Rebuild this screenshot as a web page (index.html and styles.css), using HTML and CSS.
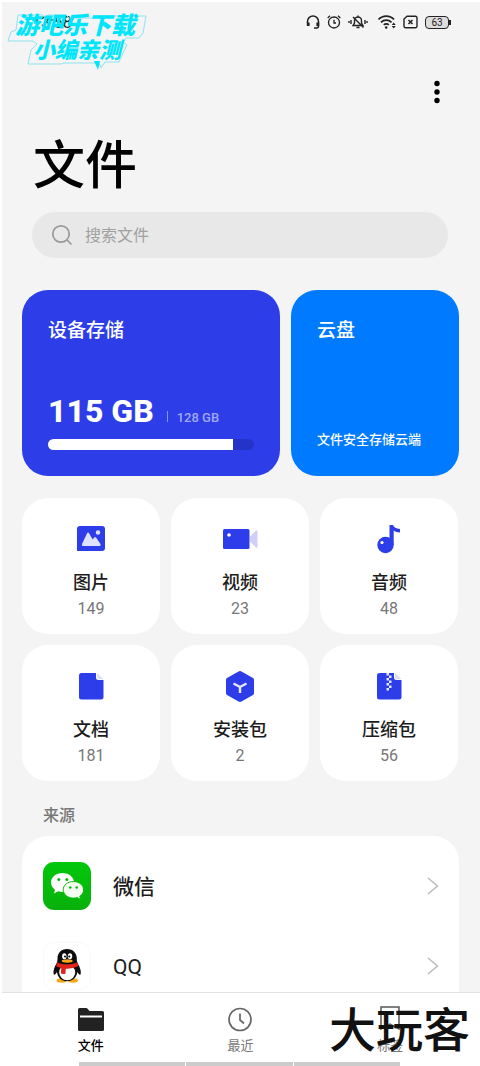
FILE: index.html
```html
<!DOCTYPE html>
<html lang="zh-CN">
<head>
<meta charset="utf-8">
<meta name="viewport" content="width=device-width, initial-scale=1">
<title>文件</title>
<link rel="stylesheet" href="styles.css">
</head>
<body>
<div class="app">
  <header class="status">
    <time class="clock">13:58</time>
    <div class="status-icons">
      <svg width="14" height="14" viewBox="0 0 14 14" fill="none" stroke="#222" stroke-width="1.500"><path d="M1.500 8V6.500a5.500 5.500 0 0 1 11 0V11a2 2 0 0 1-2 2H8"/><path d="M2.200 7.500v3.500M11.800 7.500v3.500" stroke-width="2.800"/></svg>
      <svg width="14" height="14" viewBox="0 0 14 14" fill="none" stroke="#222" stroke-width="1.300"><circle cx="7" cy="7.500" r="5.500"/><path d="M7 4.800V8h2M.7 2.900 3 .8M13.300 2.900 11 .8"/></svg>
      <svg class="bell" width="20" height="14" viewBox="0 0 20 14" fill="none" stroke="#222" stroke-width="1.400"><path d="M5 10.500h10L13.500 8V5.500a3.500 3.500 0 0 0-7 0V8zM10 .5V2M8.500 12.500h3M5 2l10.500 10.500M3 5v4M17 5v4M1 6v2M19 6v2"/></svg>
      <svg width="18" height="14" viewBox="0 0 18 14" fill="none" stroke="#222" stroke-width="1.800"><path d="M.5 4.500a10.500 10.500 0 0 1 15.500 0M3 7.300a7.500 7.500 0 0 1 10.500 0M5.800 9.900a3.500 3.500 0 0 1 5 0"/><circle cx="8.200" cy="12.500" r="1.300" fill="#222" stroke="none"/><path d="m13.700 10 2-2.500 2 2.500zM13.700 11l2 2.500 2-2.500z" fill="#222" stroke="none"/></svg>
      <svg width="15" height="14" viewBox="0 0 15 14" fill="none" stroke="#222" stroke-width="1.400"><path d="M4 1.200h8.500a1.500 1.500 0 0 1 1.500 1.500v8.600a1.500 1.500 0 0 1-1.500 1.500h-10A1.500 1.500 0 0 1 1 11.300V4z"/><path d="m5.500 5 4 4m0-4-4 4" stroke-width="1.600"/></svg>
      <span class="battery">63</span>
    </div>
  </header>

  <main class="content">
    <div class="toolbar">
      <button class="more" aria-label="更多"><svg width="8" height="26" viewBox="0 0 8 26"><circle cx="4" cy="4.500" r="2.700"/><circle cx="4" cy="13" r="2.700"/><circle cx="4" cy="21.500" r="2.700"/></svg></button>
    </div>
    <h1 class="title">文件</h1>
    <label class="search">
      <svg width="22" height="22" viewBox="0 0 22 22" fill="none" stroke="#999" stroke-width="1.700"><circle cx="10" cy="10" r="8.200"/><path d="m16 16 4.500 4.500"/></svg>
      <input class="search-input" type="search" placeholder="搜索文件" aria-label="搜索文件">
    </label>

    <section class="storage">
      <a class="card card-device" href="#device">
        <h2 class="card-title">设备存储</h2>
        <div class="usage"><strong class="used">115 GB</strong><span class="divider"></span><span class="total">128 GB</span></div>
        <div class="bar"><div class="bar-fill" style="width:90%"></div></div>
      </a>
      <a class="card card-cloud" href="#cloud">
        <h2 class="card-title">云盘</h2>
        <p class="card-note">文件安全存储云端</p>
      </a>
    </section>

    <section class="tiles">
      <a class="tile" href="#images">
        <svg class="tile-icon" width="36" height="36" viewBox="0 0 36 36"><path d="M4 8a3 3 0 0 1 3-3h22a3 3 0 0 1 3 3v19a3 3 0 0 1-3 3H4z" fill="#2d3de9"/><path d="M9 23 14 12.500q1-2.200 2.200 0l3.500 6 1.500-2q1-1.300 2.200.5L27.500 23q.8 2-1 2H10q-1.800 0-1-2z" fill="#dfe2ff"/><circle cx="25" cy="11.500" r="2.200" fill="#dfe2ff"/></svg>
        <span class="tile-name">图片</span><span class="tile-count">149</span>
      </a>
      <a class="tile" href="#videos">
        <svg class="tile-icon" width="36" height="36" viewBox="0 0 36 36"><rect x="1" y="8" width="26.500" height="20" rx="1.500" fill="#2d3de9"/><circle cx="7" cy="14" r="1.800" fill="#fff"/><path d="m28 15.500 6-6q1.500-1 1.500 1v15q0 2-1.500 1l-6-6z" fill="#cfcffa"/></svg>
        <span class="tile-name">视频</span><span class="tile-count">23</span>
      </a>
      <a class="tile" href="#audio">
        <svg class="tile-icon" width="36" height="36" viewBox="0 0 36 36"><circle cx="14.500" cy="24" r="8.200" fill="#2d3de9"/><path d="M18.500 4H22q1 3.500 7 4v3.500q-4.500 0-6.300-2V24h-4.200z" fill="#2d3de9"/><circle cx="11" cy="21.500" r="1.600" fill="#fff"/></svg>
        <span class="tile-name">音频</span><span class="tile-count">48</span>
      </a>
      <a class="tile" href="#docs">
        <svg class="tile-icon" width="36" height="36" viewBox="0 0 36 36"><path d="M6 7.500a2.500 2.500 0 0 1 2.500-2.500h14.500v4.500a2.500 2.500 0 0 0 2.500 2.500H30.500v17a2.500 2.500 0 0 1-2.500 2.500H8.500a2.500 2.500 0 0 1-2.500-2.500z" fill="#2d3de9"/><path d="M24 5l6.500 6H26a2 2 0 0 1-2-2z" fill="#dce0f5"/></svg>
        <span class="tile-name">文档</span><span class="tile-count">181</span>
      </a>
      <a class="tile" href="#apks">
        <svg class="tile-icon" width="36" height="36" viewBox="0 0 36 36"><path d="M16.500 3.500q1.500-.8 3 0L31 10q1 .7 1 2v13q0 1.300-1 2l-11.500 6.500q-1.500.8-3 0L5 27q-1-.7-1-2V12q0-1.300 1-2z" fill="#2d3de9"/><path d="m11.500 15.500 6.500 3.500 6.500-3.500M18 19v6" fill="none" stroke="#e8eaff" stroke-width="2.400"/></svg>
        <span class="tile-name">安装包</span><span class="tile-count">2</span>
      </a>
      <a class="tile" href="#archives">
        <svg class="tile-icon" width="36" height="36" viewBox="0 0 36 36"><path d="M6 7.500a2.500 2.500 0 0 1 2.500-2.500h14.500v4.500a2.500 2.500 0 0 0 2.500 2.500H30.500v17a2.500 2.500 0 0 1-2.500 2.500H8.500a2.500 2.500 0 0 1-2.500-2.500z" fill="#2d3de9"/><path d="M24 5l6.500 6H26a2 2 0 0 1-2-2z" fill="#dce0f5"/><path d="M15.500 5h2.500v2.500h2.500V10H18v2.500h2.500V15H18v2.500h2.500V20H18v2.500h-2.500V20H18v-2.500h-2.500V15H18v-2.500h-2.500V10H18V7.500h-2.500z" fill="#e8eaff"/></svg>
        <span class="tile-name">压缩包</span><span class="tile-count">56</span>
      </a>
    </section>

    <h3 class="section-label">来源</h3>
    <section class="sources">
      <a class="source" href="#wechat">
        <svg width="48" height="48" viewBox="0 0 48 48"><defs><linearGradient id="wx" x1="0" y1="0" x2="0" y2="1"><stop offset="0" stop-color="#02c80a"/><stop offset="1" stop-color="#08b00b"/></linearGradient></defs><rect width="48" height="48" rx="11" fill="url(#wx)"/><path d="M19.500 11C13 11 8 15.200 8 20.500c0 3 1.500 5.500 4 7.300L11 31.500l4.200-2.200c1.300.4 2.800.7 4.300.7 6.500 0 11.500-4.200 11.500-9.500S26 11 19.500 11z" fill="#fff"/><path d="M30.500 19.500c-5.800 0-10.300 3.700-10.300 8.300s4.500 8.300 10.300 8.300c1.300 0 2.500-.2 3.700-.6l3.400 2-.8-3.300c2.400-1.500 3.800-3.800 3.800-6.400 0-4.600-4.300-8.300-10.100-8.300z" fill="#f4fff2" stroke="#08ba0a" stroke-width="1"/><g fill="#08ba0a"><circle cx="15.800" cy="17.600" r="1.500"/><circle cx="23.800" cy="17.600" r="1.500"/><circle cx="27.300" cy="25.500" r="1.300"/><circle cx="33.700" cy="25.500" r="1.300"/></g></svg>
        <span class="source-name">微信</span>
        <svg class="chevron" width="12" height="18" viewBox="0 0 12 18"><path d="m1 1 9.500 8L1 17"/></svg>
      </a>
      <a class="source" href="#qq">
        <svg width="48" height="48" viewBox="0 0 48 48"><rect x=".5" y=".5" width="47" height="47" rx="11" fill="#fff" stroke="#f9f9f9"/><ellipse cx="18.500" cy="38.500" rx="5" ry="2.200" fill="#f7a61b"/><ellipse cx="30" cy="38.500" rx="5" ry="2.200" fill="#f7a61b"/><path d="M24 7c-6 0-9.500 4.200-9.500 9.500 0 2-.2 3.500-1 5C11.300 25 10 29 10.600 32c.4 1.800 2.200 0 3.400-2 .6 5.500 4.500 9.300 10 9.300s9.700-3.800 10.300-9.300c1.200 2 3 3.800 3.400 2 .6-3-.7-7-2.900-10.500-.8-1.500-1-3-1-5C33.800 11.200 30 7 24 7z" fill="#0c0c0c"/><ellipse cx="24.200" cy="30.500" rx="8" ry="7.800" fill="#fff"/><ellipse cx="21.300" cy="14.300" rx="2.200" ry="3" fill="#fff"/><ellipse cx="27" cy="14.300" rx="2.200" ry="3" fill="#fff"/><circle cx="22" cy="14.500" r="1"/><circle cx="26.300" cy="14.500" r="1"/><ellipse cx="24.200" cy="19" rx="5.500" ry="1.700" fill="#f7a61b"/><path d="M14 20.500q10 4 20.500 0l.8 3.500q-6 3.200-12.500 2.700l-.4 5q-2.500.5-4.500-.3l.4-5.500-5-1.500z" fill="#e2231a"/></svg>
        <span class="source-name source-latin">QQ</span>
        <svg class="chevron" width="12" height="18" viewBox="0 0 12 18"><path d="m1 1 9.500 8L1 17"/></svg>
      </a>
    </section>
  </main>

  <nav class="tabs">
    <a class="tab tab-active" href="#files">
      <svg width="28" height="28" viewBox="0 0 28 28"><path d="M1 3.500a1.500 1.500 0 0 1 1.500-1.500H9q1 0 1.600.8L12.500 5H25.500a1.500 1.500 0 0 1 1.500 1.500v17a1.500 1.500 0 0 1-1.500 1.500H2.500A1.500 1.500 0 0 1 1 23.500z" fill="#222"/><path d="M3 10.500h22" stroke="#fff" stroke-width="2"/></svg>
      <span>文件</span>
    </a>
    <a class="tab" href="#recent">
      <svg width="28" height="28" viewBox="0 0 28 28" fill="none" stroke="#666" stroke-width="1.700"><circle cx="14" cy="13.500" r="11"/><path d="M14 7.500V14l4 3.500"/></svg>
      <span>最近</span>
    </a>
    <a class="tab" href="#tags">
      <svg width="28" height="28" viewBox="0 0 28 28" fill="none" stroke="#555" stroke-width="1.500"><path d="M5 1h18v22l-9-5-9 5z"/></svg>
      <span>标签</span>
    </a>
    <div class="home"><i></i><i></i><i></i></div>
  </nav>

  <div class="mark-top">
    <svg class="mark-outline" width="142" height="66" viewBox="0 0 142 66" fill="none" stroke="#8de4ee" stroke-width="1"><path d="M11 2h24l3 2 3-2h18l3 3h24l3-2h50l-3 17-4 5h-13l-3 4 4 3-4 8-4 9h-14l-4 6-2-5H57l-3 1H21l3-14 6-6-4-3H1l3-9 5-2z"/><path d="m87 48 6 0-2 9z" fill="#00e5fa" stroke="none"/></svg>
    <span class="mark-line">游吧乐下载</span>
    <span class="mark-line mark-small">小编亲测</span>
  </div>
  <div class="mark-bottom">大玩客</div>
</div>
</body>
</html>
```
FILE: styles.css
```css
* { box-sizing: border-box; }
body {
  margin: 0;
  background: #f4f4f4;
  color: #1c1c1c;
  font-family: Roboto, "Noto Sans CJK SC", sans-serif;
}
a { color: inherit; text-decoration: none; }
svg { display: block; flex: none; }
h1, h2, h3, p { margin: 0; font-weight: 500; }

.app {
  position: relative;
  display: flex;
  flex-direction: column;
  height: 100vh;
  overflow: hidden;
  border-top: 2px solid #fff;
  border-left: 2px solid #fff;
}

.status {
  display: flex;
  flex: none;
  align-items: center;
  justify-content: space-between;
  height: 40px;
  padding: 0 31px 0 30px;
}
.clock { font-size: 16px; }
.status-icons { display: flex; align-items: center; gap: 7px; }
.bell { margin-right: 3px; }
.battery {
  position: relative;
  width: 24px;
  height: 13px;
  border: 1px solid #222;
  border-radius: 4px;
  background: #ddd;
  font-size: 10px;
  line-height: 11px;
  text-align: center;
}
.battery::after {
  content: "";
  position: absolute;
  top: 3px;
  right: -3px;
  width: 2px;
  height: 5px;
  background: #222;
}

.content {
  flex: 1;
  min-height: 0;
  overflow: hidden;
  padding: 30px 21px 0 20px;
}
.toolbar { display: flex; justify-content: flex-end; padding-right: 12px; }
.more {
  display: flex;
  align-items: center;
  justify-content: center;
  width: 20px;
  height: 40px;
  padding: 0;
  border: 0;
  background: none;
}
.title {
  margin-top: 15px;
  padding-left: 11px;
  color: #000;
  font-size: 52px;
  line-height: 80px;
}
.search {
  display: flex;
  align-items: center;
  gap: 12px;
  height: 46px;
  margin: 5px 11px 0 10px;
  padding: 0 19px;
  border-radius: 23px;
  background: #e8e8e8;
}
.search-input {
  flex: 1;
  min-width: 0;
  padding: 0;
  border: 0;
  outline: 0;
  background: none;
  font: inherit;
  font-size: 16px;
}
.search-input::placeholder { color: #a0a0a0; }

.storage {
  display: grid;
  grid-template-columns: 258fr 168fr;
  gap: 11px;
  margin-top: 32px;
}
.card {
  display: flex;
  flex-direction: column;
  height: 186px;
  padding: 26px;
  border-radius: 26px;
  color: #fff;
}
.card-device { background: #2d3ee9; }
.card-cloud { background: #007aff; }
.card-title { font-size: 19px; line-height: 30px; }
.usage { display: flex; align-items: baseline; margin-top: auto; }
.used { font-size: 32px; line-height: 40px; font-weight: 800; }
.divider { width: 1px; height: 11px; margin: 0 9px 0 13px; background: #8b94f3; }
.total { color: #a0a8f5; font-size: 13px; font-weight: 500; }
.bar {
  height: 11px;
  margin-top: 8px;
  overflow: hidden;
  border-radius: 6px;
  background: #2433c8;
}
.bar-fill { height: 100%; background: #fff; }
.card-note { margin-top: auto; font-size: 13px; line-height: 20px; white-space: nowrap; }

.tiles {
  display: grid;
  grid-template-columns: repeat(3, 1fr);
  gap: 11px;
  margin: 22px 1px 0 0;
}
.tile {
  display: flex;
  flex-direction: column;
  align-items: center;
  height: 136px;
  padding-top: 23px;
  border-radius: 26px;
  background: #fff;
}
.tile-name { margin-top: 12px; font-size: 18px; line-height: 28px; font-weight: 500; }
.tile-count { color: #777; font-size: 16px; line-height: 24px; }

.section-label {
  padding: 23px 0 8px 21px;
  color: #777;
  font-size: 16px;
  line-height: 24px;
}
.sources {
  padding: 10px 20px 0 21px;
  border-radius: 26px 26px 0 0;
  background: #fff;
}
.source { display: flex; align-items: center; height: 80px; }
.source-name { flex: 1; margin-left: 22px; padding-top: 2px; font-size: 21px; line-height: 32px; font-weight: 500; }
.source-latin { font-weight: 400; }
.chevron { fill: none; stroke: #bbb; stroke-width: 1.5; }

.tabs {
  display: grid;
  flex: none;
  grid-template-columns: repeat(3, 1fr);
  padding: 13px 15px 0 14px;
  border-top: 1px solid #e2e2e2;
  background: #fff;
}
.tab {
  display: flex;
  flex-direction: column;
  align-items: center;
  color: #777;
  font-size: 13px;
  line-height: 20px;
  gap: 2px;
}
.tab-active { color: #000; font-weight: 500; }
.home {
  display: flex;
  grid-column: 1 / -1;
  gap: 1px;
  height: 4px;
  margin: 6px 65px 0 63px;
}
.home i { flex: 1; background: #ccc; }

.mark-top {
  position: absolute;
  top: 9px;
  left: 5px;
  display: flex;
  flex-direction: column;
  color: #00e5fa;
  font-style: italic;
  font-weight: 900;
}
.mark-outline { position: absolute; top: 2px; left: 0; }
.mark-line { position: relative; padding-left: 8px; font-size: 24px; line-height: 30px; }
.mark-small { padding-left: 26px; font-size: 22px; line-height: 20px; }
.mark-bottom {
  position: absolute;
  right: 10px;
  bottom: 0;
  color: #111;
  font-size: 47px;
  line-height: 70px;
  font-weight: 500;
}
```
